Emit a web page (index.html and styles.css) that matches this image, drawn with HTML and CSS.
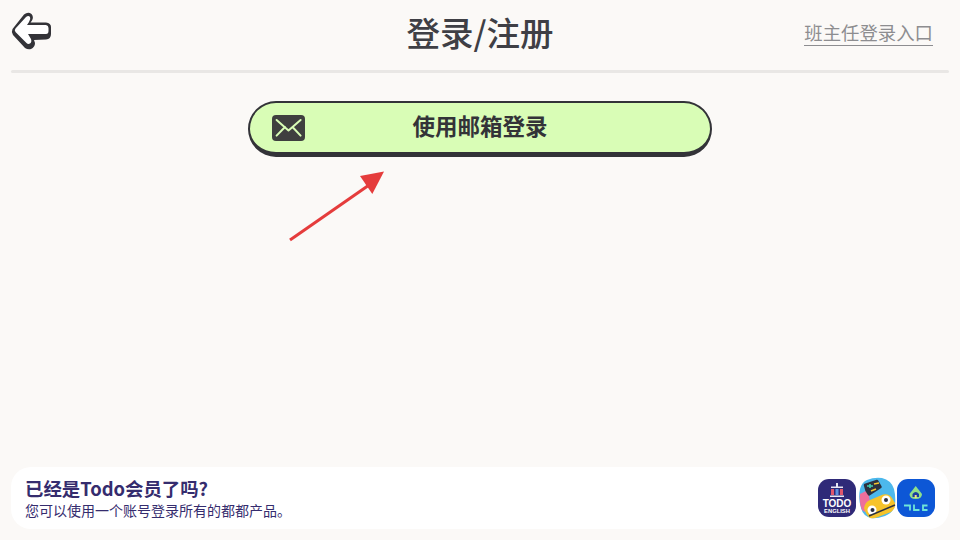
FILE: index.html
```html
<!DOCTYPE html>
<html lang="zh">
<head>
<meta charset="utf-8">
<title>登录/注册</title>
<link rel="stylesheet" href="styles.css">
</head>
<body>
<div class="page">
	<header class="topBar">
		<a class="backBtn" href="#">
			<svg width="42" height="40" viewBox="0 0 42 40">
				<path d="M14 3.500 Q18 0.500 21.500 3 Q24 6 22 9.500 L20.500 11.500 L36 11.500 Q41 12 41 16 L41 23 Q41 28 36 28.500 L24 29 L25 32 Q25 36 21 38 Q18 39 15 37 L3 24 Q1 21 2.500 18 Z" fill="#333338"/>
				<path d="M16 6 Q18.500 4 20 6 Q21 8 19 11 L17 14 L36 14 Q38.500 14.500 38.500 17 L38.500 20 Q38.500 23 36 23 L18 23 L21 28 Q22 31 20 32.500 Q18 33.500 16.500 32 L5.500 21 Q4 19 5.500 17.500 Z" fill="#fff"/>
			</svg>
		</a>
		<h1 class="title">登录/注册</h1>
		<a class="teacherLink" href="#">班主任登录入口</a>
	</header>
	<div class="divider"></div>

	<main class="content">
		<button class="mailBtn" type="button">
			<svg class="mailIcon" width="33" height="26" viewBox="0 0 33 26">
				<rect width="33" height="26" rx="4" fill="#3f3f3f"/>
				<path d="M4.600 5 L16.500 15.500 L28.600 5 M4.600 20.600 L13 12 M28.600 20.600 L20.500 12" fill="none" stroke="#d9fdb6" stroke-width="2" stroke-linecap="round" stroke-linejoin="round"/>
			</svg>
			<span>使用邮箱登录</span>
		</button>
		<svg class="hintArrow" width="100" height="74" viewBox="0 0 100 74">
			<path d="M1 71 L83 14" stroke="#e53c3c" stroke-width="3" fill="none"/>
			<path d="M95 2.500 L71 7 L83.300 25 Z" fill="#e53c3c"/>
		</svg>
	</main>

	<footer class="memberCard">
		<div class="memberText">
			<div class="memberTitle">已经是Todo会员了吗?</div>
			<div class="memberSub">您可以使用一个账号登录所有的都都产品。</div>
		</div>
		<div class="appIcons">
			<svg width="38" height="38" viewBox="0 0 38 38">
				<rect width="38" height="38" rx="11" fill="#2f2a78"/>
				<path d="M13 7.500 H25 V9 H13 Z M18 4 H20 V7.500 H18 Z" fill="#e8e8f4"/>
				<path d="M13 10 H16 V16 H13 Z" fill="#e0566c"/>
				<path d="M17.500 10 H20.500 V16 H17.500 Z" fill="#5a8fe0"/>
				<path d="M22 10 H25 V16 H22 Z" fill="#e0566c"/>
				<path d="M12 16.500 H26 V18 H12 Z" fill="#e8e8f4"/>
				<text x="19" y="27.500" class="todoBig">TODO</text>
				<text x="19" y="33.500" class="todoSmall">ENGLISH</text>
			</svg>
			<svg width="38" height="42" viewBox="0 0 38 42">
				<path d="M9 3 Q16 0 24 1 Q33 3 36 12 Q38 20 37 28 Q35 36 27 39 Q18 42 13 41 Q5 39 3 31 Q0 22 2 12 Q4 5 9 3 Z" fill="#4cb8ec"/>
				<path d="M2 17 L10 13 L12 25 L7 35 L4 33 Q1 26 2 17 Z" fill="#ee6f9c"/>
				<path d="M7 8 L19 4 L22.500 10 L11 17.500 Q8 14 7 8 Z" fill="#2c3140" stroke="#2c3140" stroke-width="2.500" stroke-linejoin="round"/>
				<path d="M9 9 H15 M12 7 V11" stroke="#3fd0b0" stroke-width="1.600"/>
				<path d="M16 7 L21 6 M13 14 L18 12" stroke="#f5c52c" stroke-width="1.600"/>
				<path d="M6 31 Q7 25 12 23 L25 17.500 Q31 16 34 21 L37 26 Q38 31 33 35 L20 40 Q15 42 12 41 Q8 38 6 31 Z" fill="#f6c32a"/>
				<circle cx="14" cy="33" r="4.500" fill="#fff"/>
				<circle cx="14.500" cy="33" r="2" fill="#2c3140"/>
				<circle cx="28" cy="23" r="4.500" fill="#fff"/>
				<circle cx="28" cy="23" r="2" fill="#2c3140"/>
				<path d="M11 39 L37 28" stroke="#2c3140" stroke-width="1.500"/>
			</svg>
			<svg width="38" height="38" viewBox="0 0 38 38">
				<rect width="38" height="38" rx="11" fill="#0d57d6"/>
				<path d="M18.700 7 L25 15 Q25 20 18.700 20 Q12.500 20 12.500 15 Z" fill="#8fe08a"/>
				<path d="M15.500 15 Q18.700 11 22 15 L22 18 L15.500 18 Z" fill="#1a3fa0"/>
				<path d="M17.700 16 H19.700 V19 H17.700 Z" fill="#f5e08a"/>
				<path d="M7 26.500 H13 V31.500 M17 25.500 V31 H22.500 M30.500 26.500 H26 V31 H30.500" fill="none" stroke="#6fe6d8" stroke-width="1.800"/>
			</svg>
		</div>
	</footer>
</div>
</body>
</html>
```

FILE: styles.css
```css
* {
	margin: 0;
	padding: 0;
	box-sizing: border-box;
}

body {
	background: #fbf9f7;
	font-family: "Noto Sans CJK SC", "Noto Sans", sans-serif;
	color: #3f3f45;
}

.page {
	width: 960px;
	height: 540px;
	display: flex;
	flex-direction: column;
	padding: 0 11px 11px;
}

/****顶部*****/
.topBar {
	height: 70px;
	padding-bottom: 6px;
	display: grid;
	grid-template-columns: 1fr auto 1fr;
	align-items: center;
}

.backBtn {
	display: block;
	width: 42px;
	height: 40px;
	margin: -2px 0 0 -1px;
}

.title {
	font-size: 33.500px;
	font-weight: 500;
	line-height: 44px;
}

.teacherLink {
	justify-self: end;
	font-size: 18.400px;
	line-height: 25px;
	color: #8d8d90;
	text-decoration: none;
	border-bottom: 1px solid #8d8d90;
	margin: 2px 16px 0 0;
}

.divider {
	height: 3px;
	background: #e9e7e5;
	border-radius: 2px;
}

/****登录按钮*****/
.content {
	flex: 1;
	position: relative;
	padding-top: 28px;
	display: flex;
	flex-direction: column;
	align-items: center;
}

.mailBtn {
	width: 464px;
	height: 56px;
	padding: 0 0 5px;
	background: #d9fdb6;
	border: 2.500px solid #333338;
	border-bottom-width: 5px;
	border-radius: 28px;
	position: relative;
	font-family: inherit;
	font-size: 22.500px;
	font-weight: 700;
	color: #333338;
}

.mailIcon {
	position: absolute;
	left: 21.500px;
	top: 11.500px;
}

.hintArrow {
	position: absolute;
	left: 278px;
	top: 96px;
}

/****底部*****/
.memberCard {
	height: 62px;
	background: #fff;
	border-radius: 20px;
	display: flex;
	align-items: center;
	justify-content: space-between;
	padding: 0 14px 0 14px;
}

.memberTitle {
	font-size: 18.400px;
	font-weight: 700;
	line-height: 24px;
	color: #352c6e;
}

.memberSub {
	font-size: 14px;
	line-height: 20px;
	color: #352c6e;
}

.appIcons {
	display: flex;
	align-items: center;
	gap: 1.500px;
}

.todoBig {
	font-family: "Liberation Sans", sans-serif;
	font-size: 10px;
	font-weight: 700;
	fill: #fff;
	text-anchor: middle;
}

.todoSmall {
	font-family: "Liberation Sans", sans-serif;
	font-size: 5.800px;
	font-weight: 700;
	fill: #fff;
	text-anchor: middle;
}
```
